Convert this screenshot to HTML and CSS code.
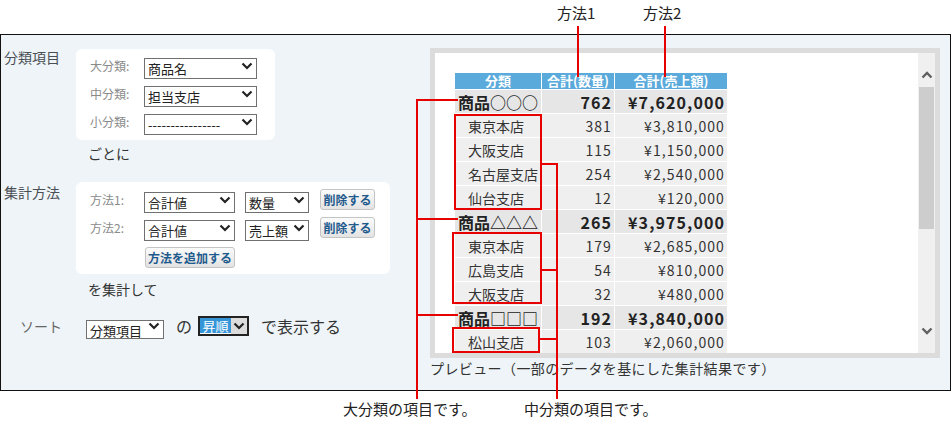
FILE: index.html
```html
<!DOCTYPE html>
<html lang="ja">
<head>
  <meta charset="UTF-8">
  <title>集計の設定</title>
  <link rel="stylesheet" href="styles.css">
</head>
<body>
  <div class="figure">
    <div class="panel">
      <div class="settings">
        <div class="section">
          <div class="section-label">分類項目</div>
          <div class="card card-group">
            <div class="field">
              <span class="field-label">大分類:</span>
              <span class="select w-group">
                <select><option>商品名</option></select>
                <svg class="chev" width="12" height="8" viewBox="0 0 12 8"><path d="M1.5 1.5 L6 6 L10.5 1.5" /></svg>
              </span>
            </div>
            <div class="field">
              <span class="field-label">中分類:</span>
              <span class="select w-group">
                <select><option>担当支店</option></select>
                <svg class="chev" width="12" height="8" viewBox="0 0 12 8"><path d="M1.5 1.5 L6 6 L10.5 1.5" /></svg>
              </span>
            </div>
            <div class="field">
              <span class="field-label">小分類:</span>
              <span class="select w-group">
                <select><option>----------------</option></select>
                <svg class="chev" width="12" height="8" viewBox="0 0 12 8"><path d="M1.5 1.5 L6 6 L10.5 1.5" /></svg>
              </span>
            </div>
          </div>
        </div>
        <div class="suffix">ごとに</div>

        <div class="section section-methods">
          <div class="section-label">集計方法</div>
          <div class="card card-methods">
            <div class="field">
              <span class="field-label">方法1:</span>
              <span class="select w-func">
                <select><option>合計値</option></select>
                <svg class="chev" width="12" height="8" viewBox="0 0 12 8"><path d="M1.5 1.5 L6 6 L10.5 1.5" /></svg>
              </span>
              <span class="select w-item">
                <select><option>数量</option></select>
                <svg class="chev" width="12" height="8" viewBox="0 0 12 8"><path d="M1.5 1.5 L6 6 L10.5 1.5" /></svg>
              </span>
              <button class="btn btn-delete">削除する</button>
            </div>
            <div class="field">
              <span class="field-label">方法2:</span>
              <span class="select w-func">
                <select><option>合計値</option></select>
                <svg class="chev" width="12" height="8" viewBox="0 0 12 8"><path d="M1.5 1.5 L6 6 L10.5 1.5" /></svg>
              </span>
              <span class="select w-item">
                <select><option>売上額</option></select>
                <svg class="chev" width="12" height="8" viewBox="0 0 12 8"><path d="M1.5 1.5 L6 6 L10.5 1.5" /></svg>
              </span>
              <button class="btn btn-delete">削除する</button>
            </div>
            <div class="field field-add">
              <button class="btn btn-add">方法を追加する</button>
            </div>
          </div>
        </div>
        <div class="suffix suffix-sum">を集計して</div>

        <div class="sort-row">
          <span class="sort-label">ソート</span>
          <span class="select w-sort">
            <select><option>分類項目</option></select>
            <svg class="chev" width="12" height="8" viewBox="0 0 12 8"><path d="M1.5 1.5 L6 6 L10.5 1.5" /></svg>
          </span>
          <span class="sort-no">の</span>
          <span class="select-focus">
            <span class="focus-text">昇順</span>
            <span class="focus-arrow">
              <svg class="chev" width="12" height="8" viewBox="0 0 12 8"><path d="M1.5 1.5 L6 6 L10.5 1.5" /></svg>
            </span>
          </span>
          <span class="sort-tail">で表示する</span>
        </div>
      </div>

      <div class="preview">
        <div class="preview-frame">
          <div class="preview-body">
            <table class="result">
              <colgroup>
                <col class="c-name">
                <col class="c-qty">
                <col class="c-amount">
              </colgroup>
              <thead>
                <tr><th>分類</th><th>合計(数量)</th><th>合計(売上額)</th></tr>
              </thead>
              <tbody>
                <tr class="group"><td>商品○○○</td><td>762</td><td>¥7,620,000</td></tr>
                <tr><td>東京本店</td><td>381</td><td>¥3,810,000</td></tr>
                <tr><td>大阪支店</td><td>115</td><td>¥1,150,000</td></tr>
                <tr><td>名古屋支店</td><td>254</td><td>¥2,540,000</td></tr>
                <tr><td>仙台支店</td><td>12</td><td>¥120,000</td></tr>
                <tr class="group"><td>商品△△△</td><td>265</td><td>¥3,975,000</td></tr>
                <tr><td>東京本店</td><td>179</td><td>¥2,685,000</td></tr>
                <tr><td>広島支店</td><td>54</td><td>¥810,000</td></tr>
                <tr><td>大阪支店</td><td>32</td><td>¥480,000</td></tr>
                <tr class="group"><td>商品□□□</td><td>192</td><td>¥3,840,000</td></tr>
                <tr><td>松山支店</td><td>103</td><td>¥2,060,000</td></tr>
              </tbody>
            </table>
          </div>
          <div class="scrollbar">
            <div class="sb-arrow sb-up">
              <svg width="12" height="8" viewBox="0 0 12 8"><path d="M1.5 6.5 L6 2 L10.5 6.5" /></svg>
            </div>
            <div class="sb-thumb"></div>
            <div class="sb-space"></div>
            <div class="sb-arrow sb-down">
              <svg width="12" height="8" viewBox="0 0 12 8"><path d="M1.5 1.5 L6 6 L10.5 1.5" /></svg>
            </div>
          </div>
        </div>
        <div class="caption">プレビュー（一部のデータを基にした集計結果です）</div>
      </div>
    </div>

    <!-- annotations -->
    <div class="note note-m1">方法1</div>
    <div class="note note-m2">方法2</div>
    <div class="note note-major">大分類の項目です。</div>
    <div class="note note-minor">中分類の項目です。</div>

    <div class="red vline" style="left:577px; top:26px; height:51px"></div>
    <div class="red vline" style="left:664px; top:26px; height:51px"></div>

    <div class="red vline" style="left:416px; top:99px; height:300px"></div>
    <div class="red hline" style="left:416px; top:99px; width:42px"></div>
    <div class="red hline" style="left:416px; top:218px; width:42px"></div>
    <div class="red hline" style="left:416px; top:314px; width:42px"></div>

    <div class="red-box" style="left:454px; top:114px; width:88px; height:96px"></div>
    <div class="red-box" style="left:452px; top:232px; width:90px; height:72px"></div>
    <div class="red-box" style="left:452px; top:327px; width:88px; height:26px"></div>

    <div class="red vline" style="left:556px; top:163px; height:236px"></div>
    <div class="red hline" style="left:540px; top:163px; width:18px"></div>
    <div class="red hline" style="left:540px; top:269px; width:18px"></div>
    <div class="red hline" style="left:538px; top:338px; width:20px"></div>
  </div>
</body>
</html>
```

FILE: styles.css
```css
/* Page */
body {
  margin: 0;
  font-family: "Noto Sans CJK JP", "Noto Sans", sans-serif;
  color: #333;
  background: #fff;
}

.figure {
  position: relative;
  box-sizing: border-box;
  width: 952px;
  height: 425px;
  padding-top: 34px;
}

/* Settings panel */
.panel {
  box-sizing: border-box;
  width: 951px;
  height: 357px;
  border: 1px solid #111;
  background: #eef4f7;
  display: flex;
}

.settings {
  width: 429px;
  padding-top: 14px;
}

.section {
  display: flex;
}

.section-label {
  width: 72px;
  padding-left: 3px;
  padding-top: 1px;
  font-size: 14px;
  line-height: 14px;
  color: #4a4f55;
}

.card {
  background: #fff;
  border-radius: 6px;
  display: flex;
  flex-direction: column;
}

.card-group {
  width: 167px;
  padding: 6px 18px 8px 14px;
  gap: 7px;
}

.card-methods {
  width: 285px;
  padding: 7px 15px 6px 14px;
  gap: 7px;
}
.card-methods .field-add {
  margin-top: 2px;
}

.section-methods {
  margin-top: 19px;
}
.section-methods .section-label {
  padding-top: 3px;
}

.field {
  display: flex;
  align-items: center;
  height: 21px;
}

.field-label {
  width: 54px;
  font-size: 12px;
  color: #8a8a8a;
}

.suffix {
  margin-top: 3px;
  padding-left: 87px;
  font-size: 14px;
  line-height: 20px;
  color: #333;
}
.suffix-sum {
  margin-top: 5px;
}

/* Select boxes */
.select {
  position: relative;
  display: inline-block;
  height: 21px;
}
.select select {
  appearance: none;
  -webkit-appearance: none;
  box-sizing: border-box;
  width: 100%;
  height: 100%;
  margin: 0;
  padding: 0 0 0 3px;
  border: 1px solid #707070;
  border-radius: 0;
  background: #fff;
  font-family: inherit;
  font-size: 13px;
  color: #222;
}
.chev {
  position: absolute;
  right: 4px;
  top: 50%;
  margin-top: -4px;
  pointer-events: none;
}
.chev path {
  fill: none;
  stroke: #222;
  stroke-width: 2.2;
}

.w-group { width: 113px; }
.w-func { width: 91px; }
.w-item { width: 64px; margin-left: 10px; }
.w-sort { width: 78px; height: 19px; }

/* Buttons */
.btn {
  box-sizing: border-box;
  height: 21px;
  padding: 0;
  border: 1px solid #c4c4c4;
  border-radius: 3px;
  background: linear-gradient(#fbfbfb, #e3e3e3);
  font-family: inherit;
  font-size: 12px;
  font-weight: bold;
  line-height: 19px;
  color: #1f5a8c;
  cursor: pointer;
}
.btn-delete {
  width: 55px;
  margin-left: 11px;
}
.btn-add {
  width: 90px;
  margin-left: 55px;
}

/* Sort row */
.sort-row {
  display: flex;
  align-items: center;
  margin-top: 17px;
  height: 20px;
}
.sort-label {
  width: 66px;
  padding-left: 19px;
  font-size: 14px;
  color: #666;
}
.sort-no {
  margin: 0 6px 0 12px;
  font-size: 16px;
  color: #333;
}
.select-focus {
  box-sizing: border-box;
  display: flex;
  width: 51px;
  height: 20px;
  border: 2px solid #222;
  background: #fff;
}
.focus-text {
  width: 31px;
  height: 15px;
  background: #3595d8;
  color: #fff;
  font-size: 13px;
  line-height: 15px;
  text-align: center;
}
.focus-arrow {
  position: relative;
  flex: 1;
  background: #dcdcdc;
}
.focus-arrow .chev {
  right: 2px;
}
.sort-tail {
  margin-left: 12px;
  font-size: 16px;
  color: #333;
}

/* Preview */
.preview {
  margin-top: 13px;
}
.preview-frame {
  display: flex;
  width: 500px;
  height: 300px;
  border: 5px solid #dcdcdc;
  background: #fff;
}
.preview-body {
  flex: 1;
  padding: 20px 0 0 20px;
  overflow: hidden;
}

.result {
  table-layout: fixed;
  width: 273px;
  border-collapse: separate;
  border-spacing: 0;
}
.c-name { width: 87px; }
.c-qty { width: 73px; }
.c-amount { width: 113px; }

.result th,
.result td {
  box-sizing: border-box;
  padding: 0;
  border-right: 1px solid #fff;
  border-bottom: 1px solid #fff;
  white-space: nowrap;
}
.result th {
  height: 17px;
  background: #5aaadb;
  color: #fff;
  font-size: 13px;
  font-weight: bold;
  line-height: 16px;
  text-align: center;
}
.result td {
  height: 24px;
  background: #efefef;
  font-size: 14px;
  line-height: 22px;
  color: #333;
  text-align: right;
  padding-right: 2px;
  letter-spacing: 1.1px;
}
.result td:first-child {
  text-align: left;
  padding: 0 0 0 13px;
  letter-spacing: 0;
}
.result .group td {
  background: #e6e6e6;
  font-size: 16px;
  font-weight: bold;
  color: #222;
}
.result .group td:first-child {
  padding-left: 3px;
}

.scrollbar {
  width: 17px;
  background: #f0f0f0;
  display: flex;
  flex-direction: column;
}
.sb-arrow {
  height: 24px;
  display: flex;
  align-items: center;
  justify-content: center;
}
.sb-up {
  padding-top: 10px;
}
.sb-down {
  padding-bottom: 10px;
}
.sb-arrow path {
  fill: none;
  stroke: #606060;
  stroke-width: 2.4;
}
.sb-thumb {
  height: 142px;
  margin: 0 1px;
  background: #cdcdcd;
}
.sb-space {
  flex: 1;
}

.caption {
  margin-top: 1px;
  font-size: 14px;
  line-height: 18px;
  letter-spacing: 0.4px;
  color: #333;
}

/* Annotations */
.note {
  position: absolute;
  font-size: 15px;
  line-height: 20px;
  color: #222;
  white-space: nowrap;
}
.note-m1 { left: 557px; top: 3px; }
.note-m2 { left: 643px; top: 3px; }
.note-major { left: 343px; top: 399px; }
.note-minor { left: 524px; top: 399px; }

.red {
  position: absolute;
  background: #e60000;
}
.vline { width: 2px; }
.hline { height: 2px; }
.red-box {
  position: absolute;
  box-sizing: border-box;
  border: 2px solid #e60000;
}
```
